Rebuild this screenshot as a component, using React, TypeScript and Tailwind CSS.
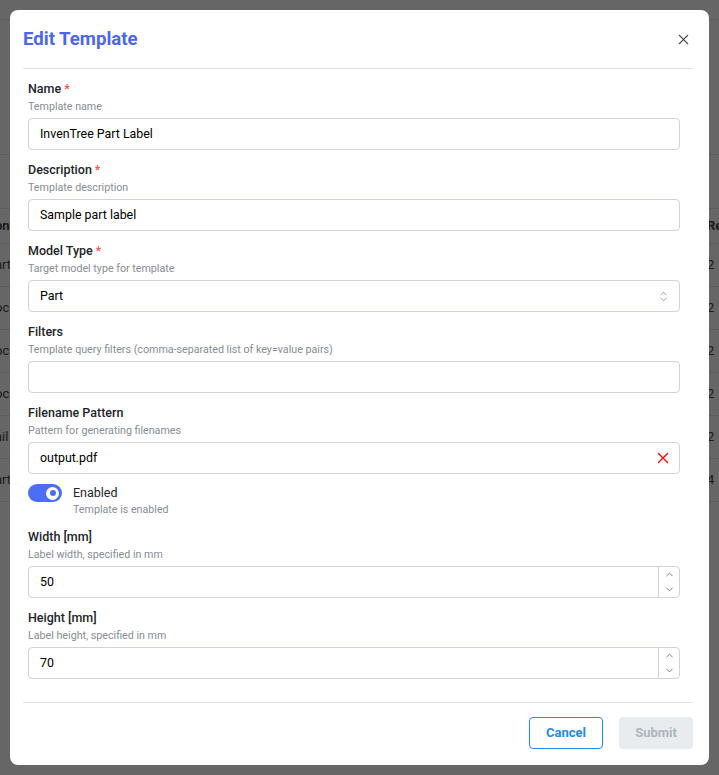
import { X, ChevronsUpDown, ChevronUp, ChevronDown } from "lucide-react";

type FieldProps = {
  label: string;
  description: string;
  required?: boolean;
  children: React.ReactNode;
};

const Field = ({ label, description, required, children }: FieldProps) => (
  <div className="flex flex-col">
    <label className="h-[20px] text-[12.5px] leading-[20px] font-medium text-[#212529]">
      {label}
      {required && <span className="ml-[3px] text-[#fa5252]">*</span>}
    </label>
    <p className="h-[16px] text-[10.7px] leading-[16px] text-[#868e96]">{description}</p>
    <div className="mt-[3px]">{children}</div>
  </div>
);

const inputBox =
  "flex h-[32px] items-center rounded-[4px] border border-[#ced4da] bg-white text-[12.4px] text-black";

const TextInput = ({ value, right }: { value: string; right?: React.ReactNode }) => (
  <div className={inputBox}>
    <span className="flex-1 pl-[11px]">{value}</span>
    {right && <span className="flex w-[32px] items-center justify-center">{right}</span>}
  </div>
);

const NumberInput = ({ value }: { value: string }) => (
  <div className={inputBox}>
    <span className="flex-1 pl-[11px]">{value}</span>
    <div className="flex h-full w-[21px] flex-col border-l border-[#ced4da]">
      <span className="flex flex-1 items-center justify-center">
        <ChevronUp size={11} strokeWidth={1.6} color="#495057" />
      </span>
      <span className="flex flex-1 items-center justify-center">
        <ChevronDown size={11} strokeWidth={1.6} color="#495057" />
      </span>
    </div>
  </div>
);

// red clear cross shown in the filename field
const ClearIcon = () => (
  <svg width="12" height="12" viewBox="0 0 12 12" fill="none">
    <path d="M1.5 1.5L10.5 10.5M10.5 1.5L1.5 10.5" stroke="#ff0000" strokeWidth="1.4" strokeLinecap="round" />
  </svg>
);

const leftCells = ["on", "art", "oc", "oc", "oc", "ail", "art"];
const rightCells = ["Re", "2", "2", "2", "2", "2", "4"];

export default function App() {
  return (
    <div className="relative h-[775px] w-full overflow-hidden bg-[#666666] font-['Roboto','Liberation_Sans',sans-serif]">
      {/* dimmed page behind the modal */}
      <div className="h-[20px] border-b border-[#5b5c5d]" />
      <div className="h-[135px] border-b border-[#5b5c5d]" />
      <div className="h-[54px] border-b border-[#5b5c5d]" />
      <div className="flex flex-col text-[13px] text-[#1a1a1a]">
        {leftCells.map((l, i) => (
          <div
            key={i}
            className={`flex items-center justify-between border-b border-[#5b5c5d] ${
              i === 0 ? "h-[35px] font-bold" : "h-[43px]"
            }`}
          >
            <span className="-ml-[5px]">{l}</span>
            <span className="mr-[-3px] w-[15px]">{rightCells[i]}</span>
          </div>
        ))}
      </div>

      {/* modal */}
      <div className="absolute left-[10px] top-[10px] flex h-[755px] w-[699px] flex-col rounded-[8px] bg-white pl-[13px] pr-[16px]">
        <div className="flex h-[59px] shrink-0 items-center justify-between border-b border-[#dee2e6]">
          <h2 className="pt-[2px] text-[18.6px] font-bold text-[#4c67ea]">Edit Template</h2>
          <X size={17} strokeWidth={1.6} color="#495057" className="mr-[1px]" />
        </div>

        <div className="flex flex-1 flex-col gap-[10px] pl-[5px] pr-[13px] pt-[10px]">
          <Field label="Name" description="Template name" required>
            <TextInput value="InvenTree Part Label" />
          </Field>
          <Field label="Description" description="Template description" required>
            <TextInput value="Sample part label" />
          </Field>
          <Field label="Model Type" description="Target model type for template" required>
            <TextInput
              value="Part"
              right={<ChevronsUpDown size={13} strokeWidth={1.5} color="#868e96" />}
            />
          </Field>
          <Field
            label="Filters"
            description="Template query filters (comma-separated list of key=value pairs)"
          >
            <TextInput value="" />
          </Field>
          <Field label="Filename Pattern" description="Pattern for generating filenames">
            <TextInput value="output.pdf" right={<ClearIcon />} />
          </Field>

          <div className="flex h-[33px] gap-[11px]">
            <div className="flex h-[18px] w-[34px] items-center justify-end rounded-full bg-[#4c6ef5] pr-[3px]">
              <div className="flex h-[13px] w-[13px] items-center justify-center rounded-full bg-white">
                <div className="h-[6px] w-[6px] rounded-full bg-[#4c6ef5]" />
              </div>
            </div>
            <div className="flex flex-col">
              <span className="text-[12.5px] leading-[17px] text-[#212529]">Enabled</span>
              <span className="mt-[1px] text-[10.7px] leading-[16px] text-[#868e96]">
                Template is enabled
              </span>
            </div>
          </div>

          <Field label="Width [mm]" description="Label width, specified in mm">
            <NumberInput value="50" />
          </Field>
          <Field label="Height [mm]" description="Label height, specified in mm">
            <NumberInput value="70" />
          </Field>
        </div>

        <div className="flex shrink-0 justify-end gap-[16px] border-t border-[#dee2e6] pb-[16px] pt-[14px]">
          <button className="h-[32px] w-[74px] rounded-[4px] border border-[#228be6] text-[13px] font-bold text-[#228be6]">
            Cancel
          </button>
          <button className="h-[32px] w-[74px] rounded-[4px] bg-[#e9ecef] text-[13px] font-bold text-[#adb5bd]">
            Submit
          </button>
        </div>
      </div>
    </div>
  );
}
